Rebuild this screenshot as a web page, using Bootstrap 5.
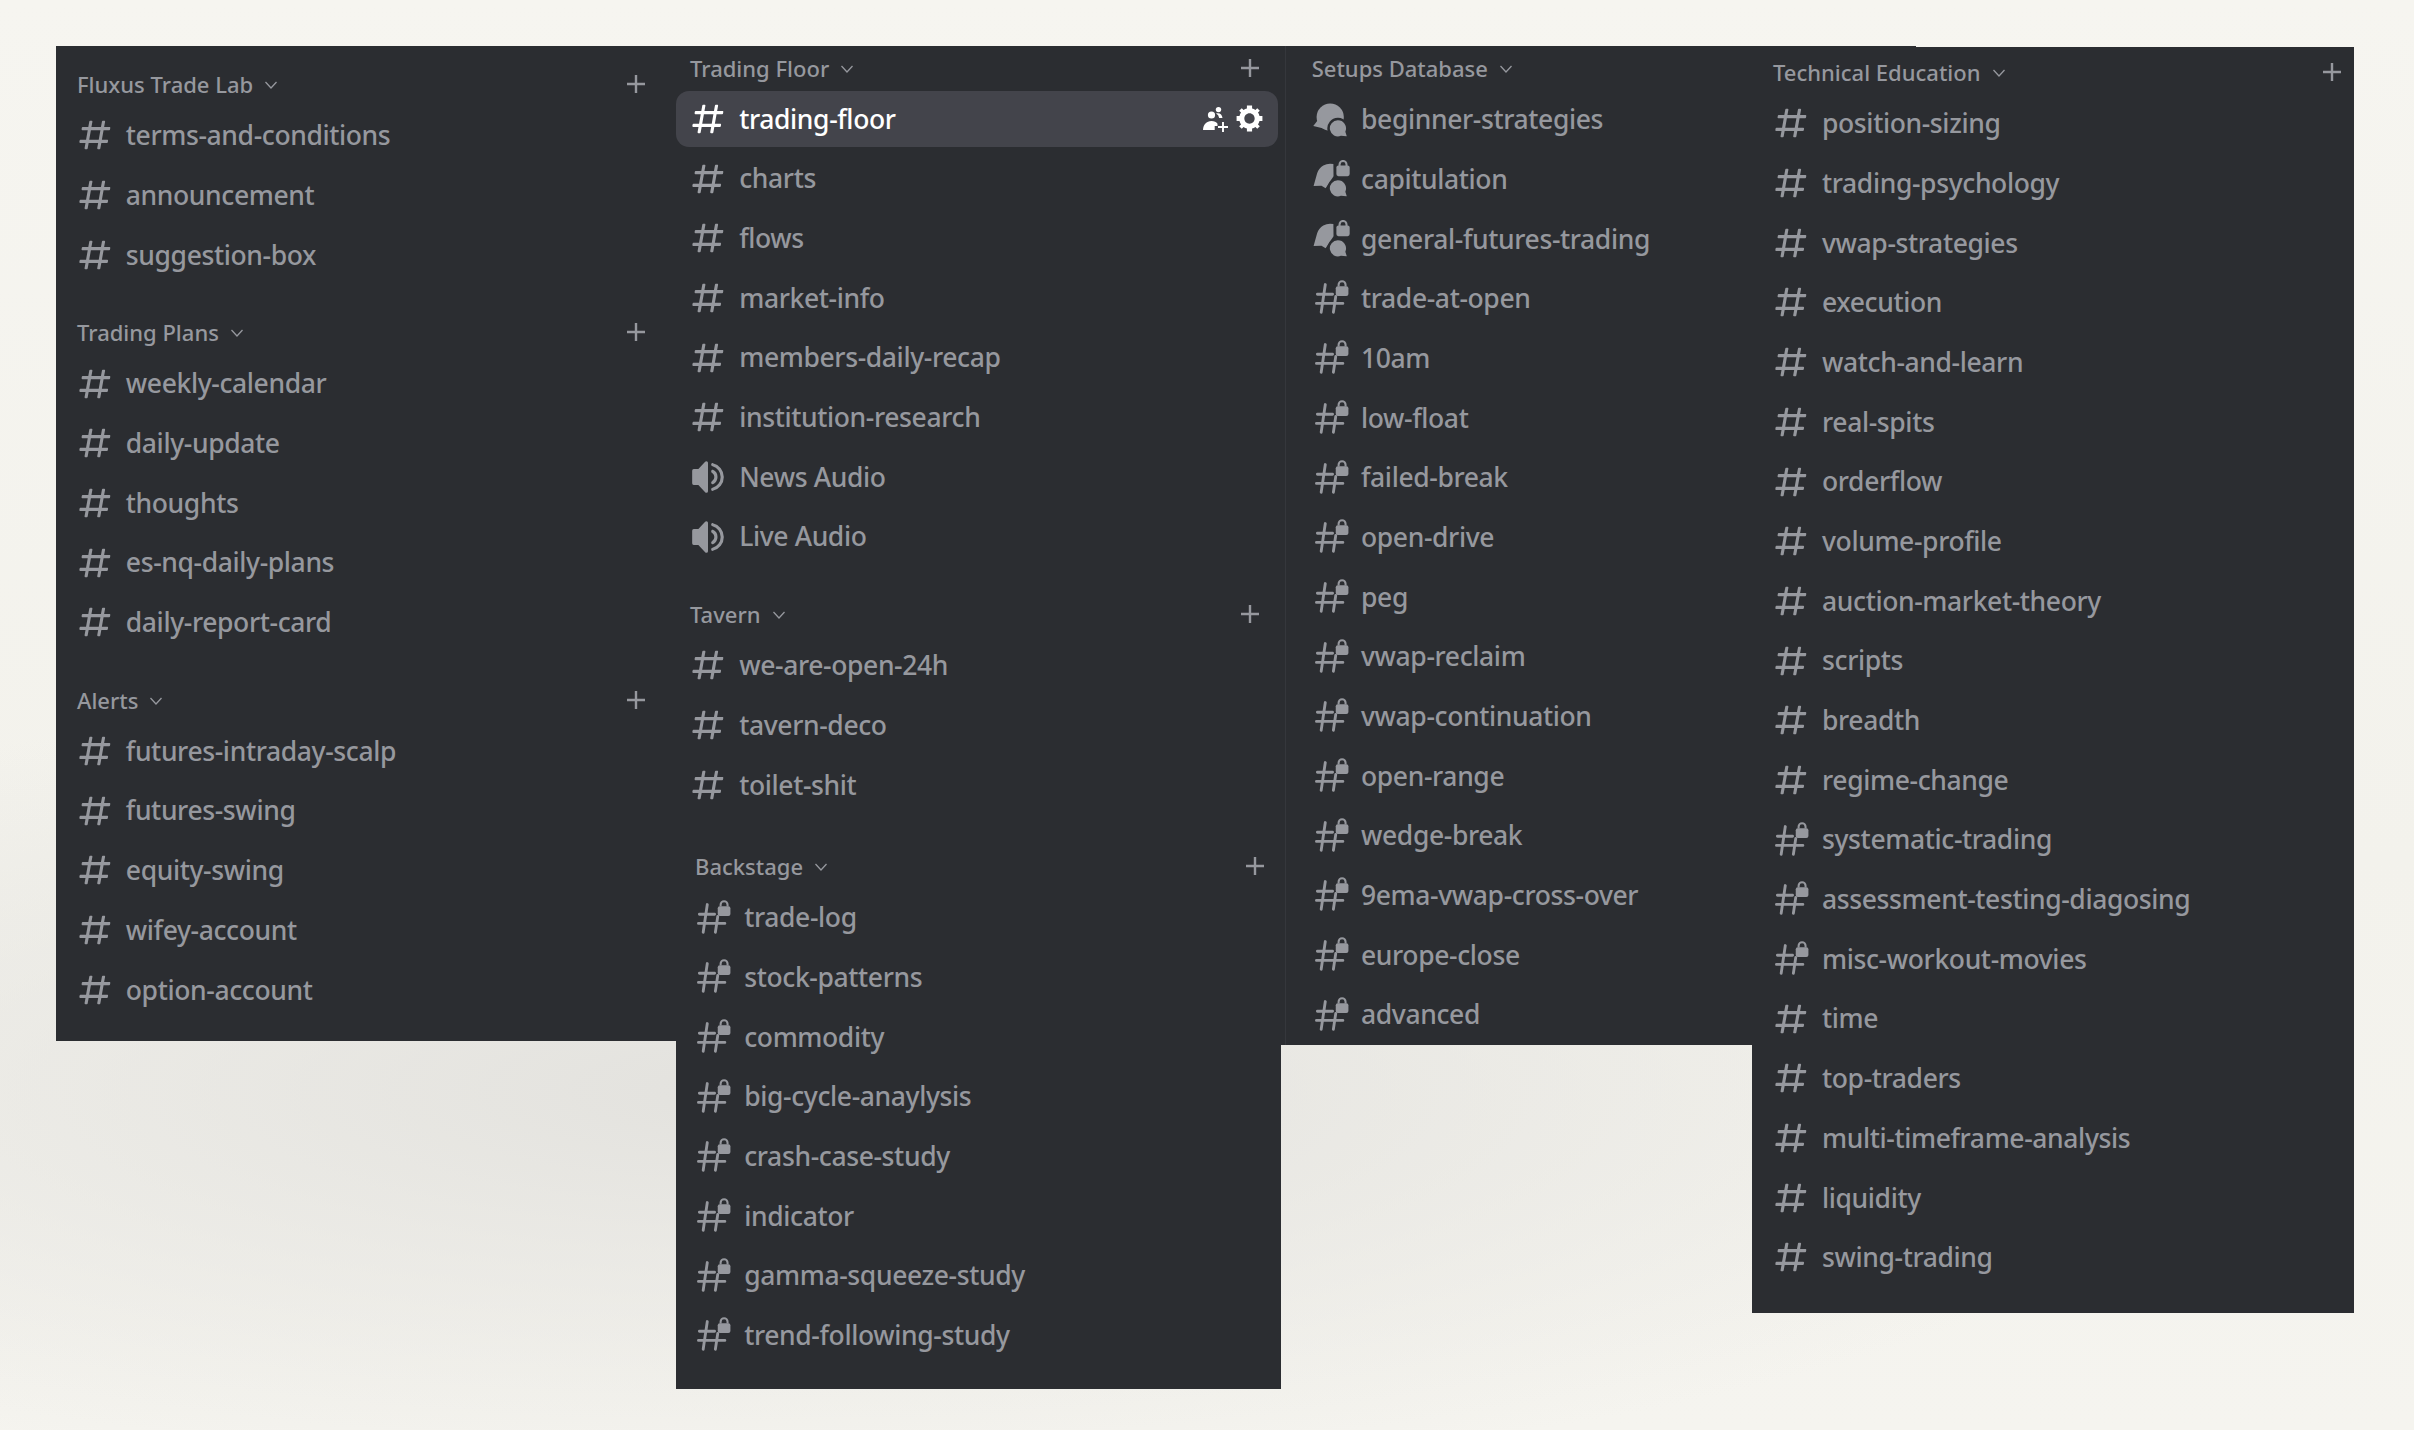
<!DOCTYPE html>
<html lang="en">
<head>
<meta charset="utf-8">
<title>Channels</title>
<link href="https://cdn.jsdelivr.net/npm/bootstrap@5.3.0/dist/css/bootstrap.min.css" rel="stylesheet">
<style>
html,body{height:100%}
body{margin:0;overflow:hidden;padding:46px 0 0 56px;font-family:"Noto Sans","Liberation Sans",sans-serif;
 background:radial-gradient(ellipse 1500px 400px at 750px 1090px,#e3e2de 0%,rgba(227,226,222,0) 100%),linear-gradient(#f6f5f0,#f3f2ec 60%,#f5f4ef);color:#96989e}
.panel{background:#2b2d31;flex:none;--ix:20.3px;--hx:21px;--pr:30px}
.p1{width:620px;padding:16.5px 0 21.500px}
.p2{width:605px;padding:0 0 23.500px;--ix:13.300px;--hx:14px;--pr:21px}
.p3{width:635px;padding:.5px 0 .5px;--ix:30.5px;--hx:30.7px;background:linear-gradient(#35373c,#35373c) 4px 0/1px 100% no-repeat,#2b2d31}
.p4{width:602px;margin:1px 0 0 -164px;padding:3.5px 0 25.500px;--ix:19.500px;--pr:12px}
.p4 .ic{margin-right:1px}
.p2 .ic{margin-right:.400px}
.sec+.sec{margin-top:27.875px}
.sec.back{margin-top:31.875px;margin-left:5px}
.hd{height:43px;margin-bottom:1.875px;padding:0 var(--pr) 0 var(--hx);font-size:22px;font-weight:500;line-height:1}
.chev{width:14px;height:8px;margin-left:11px;margin-top:2px;fill:none;stroke:currentColor;stroke-width:1.3}
.plus{width:20px;height:20px;stroke:currentColor;stroke-width:2.4;fill:none}
.back .plus{margin-right:-5px}
.ch{height:56px;margin:0 3px 3.700px 0;padding:0 12.6px 0 var(--ix);border-radius:13px;font-size:26.5px;letter-spacing:-.38px;font-weight:500;line-height:1;gap:11.5px;white-space:nowrap;color:#96989e}
.ch:last-child{margin-bottom:1.875px}
.ch.on{background:#43444b;color:#fff}
.ic{width:38px;height:38px;fill:currentColor;flex:none}
.tool{fill:#fff;flex:none}
.t-inv{width:26px;height:26px;margin-right:-6px}
.t-gear{width:31px;height:31px}
</style>
</head>
<body class="d-flex align-items-start">
<svg width="0" height="0" class="d-none" aria-hidden="true">
<symbol id="hash" viewBox="0 0 24 24"><path d="M5.88657 21C5.57547 21 5.3399 20.7189 5.39427 20.4126L6.00001 17H2.59511C2.28449 17 2.04905 16.7198 2.10259 16.4138L2.27759 15.4138C2.31946 15.1746 2.52722 15 2.77011 15H6.35001L7.41001 9H4.00511C3.69449 9 3.45905 8.71977 3.51259 8.41381L3.68759 7.41381C3.72946 7.17456 3.93722 7 4.18011 7H7.76001L8.39677 3.41262C8.43914 3.17391 8.64664 3 8.88907 3H9.87344C10.1845 3 10.4201 3.28107 10.3657 3.58738L9.76001 7H15.76L16.3968 3.41262C16.4391 3.17391 16.6466 3 16.8891 3H17.8734C18.1845 3 18.4201 3.28107 18.3657 3.58738L17.76 7H21.1649C21.4755 7 21.711 7.28023 21.6574 7.58619L21.4824 8.58619C21.4406 8.82544 21.2328 9 20.9899 9H17.41L16.35 15H19.7549C20.0655 15 20.301 15.2802 20.2474 15.5862L20.0724 16.5862C20.0306 16.8254 19.8228 17 19.5799 17H16L15.3632 20.5874C15.3209 20.8261 15.1134 21 14.8709 21H13.8866C13.5755 21 13.3399 20.7189 13.3943 20.4126L14 17H8.00001L7.36325 20.5874C7.32088 20.8261 7.11337 21 6.87094 21H5.88657ZM9.41045 9L8.35045 15H14.3504L15.4104 9H9.41045Z"/></symbol>
<symbol id="lock" viewBox="0 0 24 24"><g fill="none" stroke="currentColor" stroke-width="1.8" stroke-linecap="round"><path d="M8.4 3.5 5.8 21M15 11 13.500 21M3.400 9.600H13M2.800 15.400H19.500"/></g><rect x="15" y="4.500" width="8" height="6.300" rx="1.300"/><path d="M16.800 4.800V3.600a2.200 2.200 0 0 1 4.400 0v1.200" fill="none" stroke="currentColor" stroke-width="1.300"/></symbol>
<symbol id="audio" viewBox="0 0 24 24"><path d="M12 3a1 1 0 0 0-1-1h-.06a1 1 0 0 0-.74.32L5.92 7H3a1 1 0 0 0-1 1v8a1 1 0 0 0 1 1h2.92l4.28 4.68a1 1 0 0 0 .74.32H11a1 1 0 0 0 1-1V3ZM15.1 20.75c-.58.14-1.1-.33-1.1-.92v-.03c0-.5.37-.92.85-1.05a7 7 0 0 0 0-13.5A1.11 1.11 0 0 1 14 4.2v-.03c0-.6.52-1.06 1.1-.92a9 9 0 0 1 0 17.5Z"/><path d="M15.16 16.51c-.57.28-1.16-.2-1.16-.83v-.14c0-.43.28-.8.63-1.02a3 3 0 0 0 0-5.04c-.35-.23-.63-.6-.63-1.02v-.14c0-.63.59-1.1 1.16-.83a5 5 0 0 1 0 9.02Z"/></symbol>
<symbol id="forum" viewBox="0 0 24 24"><circle cx="11.500" cy="10.800" r="8.600"/><path d="M.8 16.400 5 11l3 7.200Z"/><path d="M16.300 12a5.900 5.900 0 1 0 2.200 11.400l4.600.4-1.200-3.800A5.900 5.900 0 0 0 16.300 12Z" stroke="#2b2d31" stroke-width="1.600"/></symbol>
<symbol id="forumlock" viewBox="0 0 24 24"><path d="M13.500 2.600a8.600 8.600 0 0 0-10.300 6L1 16.400l5-.2 2.600 1.600 5-7.600Z"/><path d="M16.300 12a5.900 5.900 0 1 0 2.200 11.400l4.600.4-1.200-3.800A5.900 5.900 0 0 0 16.300 12Z" stroke="#2b2d31" stroke-width="1.600"/><rect x="15.400" y="3.400" width="8.400" height="6.800" rx="1.300"/><path d="M17.400 3.800V2.800a2.200 2.200 0 0 1 4.400 0v1" fill="none" stroke="currentColor" stroke-width="1.300"/></symbol>
<symbol id="gear" viewBox="0 0 24 24"><path d="M19.738 10H22V14H19.739C19.498 14.931 19.1 15.798 18.565 16.564L20 18L18 20L16.565 18.564C15.797 19.099 14.932 19.498 14 19.738V22H10V19.738C9.069 19.498 8.203 19.099 7.436 18.564L6 20L4 18L5.436 16.564C4.901 15.799 4.502 14.932 4.262 14H2V10H4.262C4.502 9.068 4.9 8.202 5.436 7.436L4 6L6 4L7.436 5.436C8.202 4.9 9.068 4.502 10 4.262V2H14V4.261C14.932 4.502 15.797 4.9 16.565 5.435L18 3.999L20 5.999L18.564 7.436C19.099 8.202 19.498 9.069 19.738 10ZM12 16C14.2091 16 16 14.2091 16 12C16 9.79086 14.2091 8 12 8C9.79086 8 8 9.79086 8 12C8 14.2091 9.79086 16 12 16Z"/></symbol>
<symbol id="invite" viewBox="0 0 26 26"><circle cx="8.500" cy="9" r="3.600"/><path d="M0 24c.3-5.400 3.400-9 8.500-9 2.800 0 4.800 1 6 2.800V20h-2.800v4Z"/><circle cx="15.500" cy="3.600" r="2.700"/><path d="M13 7.600c3.800-.9 6 .8 6.500 4.400h-3.300a6 6 0 0 0-3.200-4.400Z"/><path d="M20 16v10M15 21h10" stroke="#fff" stroke-width="1.900" fill="none"/></symbol>
<symbol id="chev" viewBox="0 0 14 8"><path d="M1.500 1 7 7l5.500-6"/></symbol>
<symbol id="plus" viewBox="0 0 20 20"><path d="M10 1v18M1 10h18"/></symbol>
</svg>

<div class="panel p1">
 <section class="sec">
  <div class="hd d-flex align-items-center"><span>Fluxus Trade Lab</span><svg class="chev"><use href="#chev"/></svg><svg class="plus ms-auto"><use href="#plus"/></svg></div>
  <div class="ch d-flex align-items-center"><svg class="ic"><use href="#hash"/></svg><span>terms-and-conditions</span></div>
  <div class="ch d-flex align-items-center"><svg class="ic"><use href="#hash"/></svg><span>announcement</span></div>
  <div class="ch d-flex align-items-center"><svg class="ic"><use href="#hash"/></svg><span>suggestion-box</span></div>
 </section>
 <section class="sec">
  <div class="hd d-flex align-items-center"><span>Trading Plans</span><svg class="chev"><use href="#chev"/></svg><svg class="plus ms-auto"><use href="#plus"/></svg></div>
  <div class="ch d-flex align-items-center"><svg class="ic"><use href="#hash"/></svg><span>weekly-calendar</span></div>
  <div class="ch d-flex align-items-center"><svg class="ic"><use href="#hash"/></svg><span>daily-update</span></div>
  <div class="ch d-flex align-items-center"><svg class="ic"><use href="#hash"/></svg><span>thoughts</span></div>
  <div class="ch d-flex align-items-center"><svg class="ic"><use href="#hash"/></svg><span>es-nq-daily-plans</span></div>
  <div class="ch d-flex align-items-center"><svg class="ic"><use href="#hash"/></svg><span>daily-report-card</span></div>
 </section>
 <section class="sec">
  <div class="hd d-flex align-items-center"><span>Alerts</span><svg class="chev"><use href="#chev"/></svg><svg class="plus ms-auto"><use href="#plus"/></svg></div>
  <div class="ch d-flex align-items-center"><svg class="ic"><use href="#hash"/></svg><span>futures-intraday-scalp</span></div>
  <div class="ch d-flex align-items-center"><svg class="ic"><use href="#hash"/></svg><span>futures-swing</span></div>
  <div class="ch d-flex align-items-center"><svg class="ic"><use href="#hash"/></svg><span>equity-swing</span></div>
  <div class="ch d-flex align-items-center"><svg class="ic"><use href="#hash"/></svg><span>wifey-account</span></div>
  <div class="ch d-flex align-items-center"><svg class="ic"><use href="#hash"/></svg><span>option-account</span></div>
 </section>
</div>

<div class="panel p2">
 <section class="sec">
  <div class="hd d-flex align-items-center"><span>Trading Floor</span><svg class="chev"><use href="#chev"/></svg><svg class="plus ms-auto"><use href="#plus"/></svg></div>
  <div class="ch on d-flex align-items-center"><svg class="ic"><use href="#hash"/></svg><span>trading-floor</span><svg class="tool t-inv ms-auto"><use href="#invite"/></svg><svg class="tool t-gear"><use href="#gear"/></svg></div>
  <div class="ch d-flex align-items-center"><svg class="ic"><use href="#hash"/></svg><span>charts</span></div>
  <div class="ch d-flex align-items-center"><svg class="ic"><use href="#hash"/></svg><span>flows</span></div>
  <div class="ch d-flex align-items-center"><svg class="ic"><use href="#hash"/></svg><span>market-info</span></div>
  <div class="ch d-flex align-items-center"><svg class="ic"><use href="#hash"/></svg><span>members-daily-recap</span></div>
  <div class="ch d-flex align-items-center"><svg class="ic"><use href="#hash"/></svg><span>institution-research</span></div>
  <div class="ch d-flex align-items-center"><svg class="ic"><use href="#audio"/></svg><span>News Audio</span></div>
  <div class="ch d-flex align-items-center"><svg class="ic"><use href="#audio"/></svg><span>Live Audio</span></div>
 </section>
 <section class="sec">
  <div class="hd d-flex align-items-center"><span>Tavern</span><svg class="chev"><use href="#chev"/></svg><svg class="plus ms-auto"><use href="#plus"/></svg></div>
  <div class="ch d-flex align-items-center"><svg class="ic"><use href="#hash"/></svg><span>we-are-open-24h</span></div>
  <div class="ch d-flex align-items-center"><svg class="ic"><use href="#hash"/></svg><span>tavern-deco</span></div>
  <div class="ch d-flex align-items-center"><svg class="ic"><use href="#hash"/></svg><span>toilet-shit</span></div>
 </section>
 <section class="sec back">
  <div class="hd d-flex align-items-center"><span>Backstage</span><svg class="chev"><use href="#chev"/></svg><svg class="plus ms-auto"><use href="#plus"/></svg></div>
  <div class="ch d-flex align-items-center"><svg class="ic"><use href="#lock"/></svg><span>trade-log</span></div>
  <div class="ch d-flex align-items-center"><svg class="ic"><use href="#lock"/></svg><span>stock-patterns</span></div>
  <div class="ch d-flex align-items-center"><svg class="ic"><use href="#lock"/></svg><span>commodity</span></div>
  <div class="ch d-flex align-items-center"><svg class="ic"><use href="#lock"/></svg><span>big-cycle-anaylysis</span></div>
  <div class="ch d-flex align-items-center"><svg class="ic"><use href="#lock"/></svg><span>crash-case-study</span></div>
  <div class="ch d-flex align-items-center"><svg class="ic"><use href="#lock"/></svg><span>indicator</span></div>
  <div class="ch d-flex align-items-center"><svg class="ic"><use href="#lock"/></svg><span>gamma-squeeze-study</span></div>
  <div class="ch d-flex align-items-center"><svg class="ic"><use href="#lock"/></svg><span>trend-following-study</span></div>
 </section>
</div>

<div class="panel p3">
 <section class="sec">
  <div class="hd d-flex align-items-center"><span>Setups Database</span><svg class="chev"><use href="#chev"/></svg></div>
  <div class="ch d-flex align-items-center"><svg class="ic"><use href="#forum"/></svg><span>beginner-strategies</span></div>
  <div class="ch d-flex align-items-center"><svg class="ic"><use href="#forumlock"/></svg><span>capitulation</span></div>
  <div class="ch d-flex align-items-center"><svg class="ic"><use href="#forumlock"/></svg><span>general-futures-trading</span></div>
  <div class="ch d-flex align-items-center"><svg class="ic"><use href="#lock"/></svg><span>trade-at-open</span></div>
  <div class="ch d-flex align-items-center"><svg class="ic"><use href="#lock"/></svg><span>10am</span></div>
  <div class="ch d-flex align-items-center"><svg class="ic"><use href="#lock"/></svg><span>low-float</span></div>
  <div class="ch d-flex align-items-center"><svg class="ic"><use href="#lock"/></svg><span>failed-break</span></div>
  <div class="ch d-flex align-items-center"><svg class="ic"><use href="#lock"/></svg><span>open-drive</span></div>
  <div class="ch d-flex align-items-center"><svg class="ic"><use href="#lock"/></svg><span>peg</span></div>
  <div class="ch d-flex align-items-center"><svg class="ic"><use href="#lock"/></svg><span>vwap-reclaim</span></div>
  <div class="ch d-flex align-items-center"><svg class="ic"><use href="#lock"/></svg><span>vwap-continuation</span></div>
  <div class="ch d-flex align-items-center"><svg class="ic"><use href="#lock"/></svg><span>open-range</span></div>
  <div class="ch d-flex align-items-center"><svg class="ic"><use href="#lock"/></svg><span>wedge-break</span></div>
  <div class="ch d-flex align-items-center"><svg class="ic"><use href="#lock"/></svg><span>9ema-vwap-cross-over</span></div>
  <div class="ch d-flex align-items-center"><svg class="ic"><use href="#lock"/></svg><span>europe-close</span></div>
  <div class="ch d-flex align-items-center"><svg class="ic"><use href="#lock"/></svg><span>advanced</span></div>
 </section>
</div>

<div class="panel p4">
 <section class="sec">
  <div class="hd d-flex align-items-center"><span>Technical Education</span><svg class="chev"><use href="#chev"/></svg><svg class="plus ms-auto"><use href="#plus"/></svg></div>
  <div class="ch d-flex align-items-center"><svg class="ic"><use href="#hash"/></svg><span>position-sizing</span></div>
  <div class="ch d-flex align-items-center"><svg class="ic"><use href="#hash"/></svg><span>trading-psychology</span></div>
  <div class="ch d-flex align-items-center"><svg class="ic"><use href="#hash"/></svg><span>vwap-strategies</span></div>
  <div class="ch d-flex align-items-center"><svg class="ic"><use href="#hash"/></svg><span>execution</span></div>
  <div class="ch d-flex align-items-center"><svg class="ic"><use href="#hash"/></svg><span>watch-and-learn</span></div>
  <div class="ch d-flex align-items-center"><svg class="ic"><use href="#hash"/></svg><span>real-spits</span></div>
  <div class="ch d-flex align-items-center"><svg class="ic"><use href="#hash"/></svg><span>orderflow</span></div>
  <div class="ch d-flex align-items-center"><svg class="ic"><use href="#hash"/></svg><span>volume-profile</span></div>
  <div class="ch d-flex align-items-center"><svg class="ic"><use href="#hash"/></svg><span>auction-market-theory</span></div>
  <div class="ch d-flex align-items-center"><svg class="ic"><use href="#hash"/></svg><span>scripts</span></div>
  <div class="ch d-flex align-items-center"><svg class="ic"><use href="#hash"/></svg><span>breadth</span></div>
  <div class="ch d-flex align-items-center"><svg class="ic"><use href="#hash"/></svg><span>regime-change</span></div>
  <div class="ch d-flex align-items-center"><svg class="ic"><use href="#lock"/></svg><span>systematic-trading</span></div>
  <div class="ch d-flex align-items-center"><svg class="ic"><use href="#lock"/></svg><span>assessment-testing-diagosing</span></div>
  <div class="ch d-flex align-items-center"><svg class="ic"><use href="#lock"/></svg><span>misc-workout-movies</span></div>
  <div class="ch d-flex align-items-center"><svg class="ic"><use href="#hash"/></svg><span>time</span></div>
  <div class="ch d-flex align-items-center"><svg class="ic"><use href="#hash"/></svg><span>top-traders</span></div>
  <div class="ch d-flex align-items-center"><svg class="ic"><use href="#hash"/></svg><span>multi-timeframe-analysis</span></div>
  <div class="ch d-flex align-items-center"><svg class="ic"><use href="#hash"/></svg><span>liquidity</span></div>
  <div class="ch d-flex align-items-center"><svg class="ic"><use href="#hash"/></svg><span>swing-trading</span></div>
 </section>
</div>
<script src="https://cdn.jsdelivr.net/npm/bootstrap@5.3.0/dist/js/bootstrap.bundle.min.js"></script>
</body>
</html>
